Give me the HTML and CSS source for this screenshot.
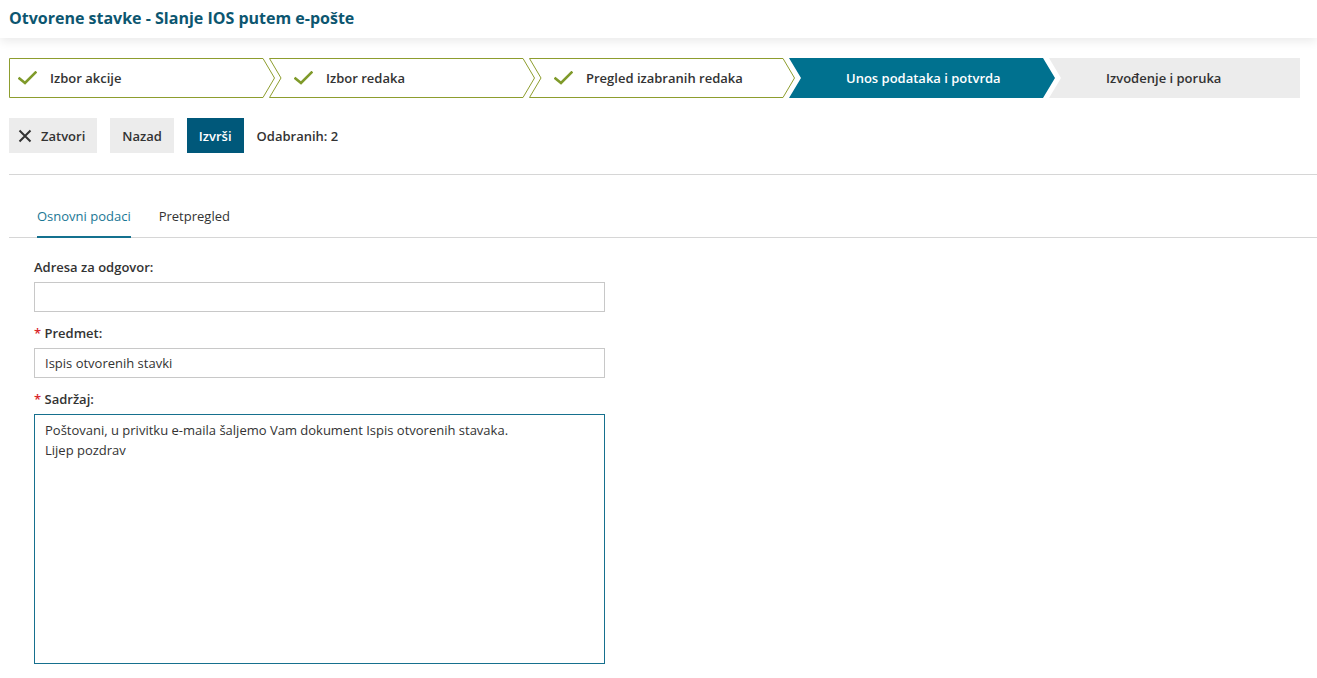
FILE: index.html
```html
<!DOCTYPE html>
<html lang="hr">
<head>
    <meta charset="UTF-8">
    <meta name="viewport" content="width=device-width, initial-scale=1.0">
    <title>Otvorene stavke - Slanje IOS putem e-pošte</title>
    <link rel="stylesheet" href="styles.css">
</head>
<body>

    <!-- Page header -->
    <div class="page-header">
        <h1>Otvorene stavke - Slanje IOS putem e-pošte</h1>
    </div>

    <!-- Wizard steps -->
    <div class="steps">
        <div class="step done first">
            <svg class="shape" width="266" height="40" viewBox="0 0 266 40"><polygon points="0.5,0.5 254,0.5 265.5,20 254,39.5 0.5,39.5" /></svg>
            <svg class="check" width="19" height="14" viewBox="0 0 19 14"><path d="M1.5 7.5 L7 12 L17.5 1.5" /></svg>
            <span class="step-label">Izbor akcije</span>
        </div>
        <div class="step done">
            <svg class="shape" width="266" height="40" viewBox="0 0 266 40"><polygon points="0.5,0.5 254,0.5 265.5,20 254,39.5 0.5,39.5 12,20" /></svg>
            <svg class="check" width="19" height="14" viewBox="0 0 19 14"><path d="M1.5 7.5 L7 12 L17.5 1.5" /></svg>
            <span class="step-label">Izbor redaka</span>
        </div>
        <div class="step done">
            <svg class="shape" width="266" height="40" viewBox="0 0 266 40"><polygon points="0.5,0.5 254,0.5 265.5,20 254,39.5 0.5,39.5 12,20" /></svg>
            <svg class="check" width="19" height="14" viewBox="0 0 19 14"><path d="M1.5 7.5 L7 12 L17.5 1.5" /></svg>
            <span class="step-label">Pregled izabranih redaka</span>
        </div>
        <div class="step active">
            <svg class="shape" width="266" height="40" viewBox="0 0 266 40"><polygon points="0,0 254,0 266,20 254,40 0,40 12,20" /></svg>
            <span class="step-label">Unos podataka i potvrda</span>
        </div>
        <div class="step todo last">
            <svg class="shape" width="251" height="40" viewBox="0 0 251 40"><polygon points="0,0 251,0 251,40 0,40 12,20" /></svg>
            <span class="step-label">Izvođenje i poruka</span>
        </div>
    </div>

    <!-- Toolbar -->
    <div class="toolbar">
        <button class="btn btn-light btn-close">
            <svg class="icon-x" width="14" height="14" viewBox="0 0 14 14"><path d="M1.5 1.5 L12.5 12.5 M12.5 1.5 L1.5 12.5" /></svg>
            Zatvori
        </button>
        <button class="btn btn-light">Nazad</button>
        <button class="btn btn-primary">Izvrši</button>
        <span class="selected-count">Odabranih: 2</span>
    </div>

    <div class="divider"></div>

    <!-- Tabs -->
    <div class="tabs">
        <a href="#" class="tab active">Osnovni podaci</a>
        <a href="#" class="tab">Pretpregled</a>
    </div>

    <!-- Form -->
    <div class="form">
        <label class="field-label" for="replyTo">Adresa za odgovor:</label>
        <input type="text" id="replyTo" class="field-input">

        <label class="field-label" for="subject"><span class="req">*</span> Predmet:</label>
        <input type="text" id="subject" class="field-input" value="Ispis otvorenih stavki">

        <label class="field-label" for="body"><span class="req">*</span> Sadržaj:</label>
        <textarea id="body" class="field-textarea">Poštovani, u privitku e-maila šaljemo Vam dokument Ispis otvorenih stavaka.
Lijep pozdrav</textarea>
    </div>

</body>
</html>
```

FILE: styles.css
```css
body { margin: 0; font-family: "Open Sans", "DejaVu Sans", sans-serif; font-size: 13px; color: #333; background: #fff; }

/* Header */
.page-header { height: 38px; padding: 0 9px; box-shadow: 0 3px 10px rgba(0, 0, 0, 0.09); position: relative; }
.page-header h1 { margin: 0; font-size: 16px; line-height: 36px; font-weight: 700; color: #0c5670; }

/* Wizard steps */
.steps { display: flex; margin: 20px 0 0 9px; height: 40px; }
.step { position: relative; width: 266px; height: 40px; margin-right: -6px; display: flex; align-items: center; padding-left: 25px; box-sizing: border-box; font-weight: 600; }
.step .shape { position: absolute; left: 0; top: 0; }
.step .check, .step .step-label { position: relative; }
.step.first { padding-left: 9px; }
.step.done .shape polygon { fill: #fff; stroke: #8d9d2e; stroke-width: 1; }
.step.active .shape polygon { fill: #00718f; }
.step.todo .shape polygon { fill: #ececec; }
.step.active, .step.todo { padding-left: 57px; }
.step.active .step-label { color: #fff; }
.step.last { width: 251px; margin-right: 0; }
.check { margin-right: 13px; }
.check path { fill: none; stroke: #7f9a2a; stroke-width: 2.6; stroke-linecap: square; }

/* Toolbar */
.toolbar { display: flex; align-items: center; gap: 13px; margin: 20px 0 0 9px; }
.btn { height: 35px; border: none; padding: 0 12px; font-family: inherit; font-size: 13px; font-weight: 600; cursor: pointer; display: flex; align-items: center; }
.btn-light { background: #ececec; color: #333; }
.btn-close { padding: 0 12px 0 9px; }
.btn-primary { background: #00587a; color: #fff; padding: 0 12px; }
.icon-x { margin-right: 9px; }
.icon-x path { stroke: #333; stroke-width: 2; fill: none; }
.selected-count { font-weight: 600; }

.divider { height: 1px; background: #d6d6d6; margin: 21px 0 0 9px; }

/* Tabs */
.tabs { display: flex; gap: 28px; margin-left: 9px; padding: 31px 0 0 28px; border-bottom: 1px solid #d6d6d6; }
.tab { display: block; line-height: 20px; padding-bottom: 10px; margin-bottom: -1px; border-bottom: 2px solid transparent; color: #333; text-decoration: none; }
.tab.active { color: #1b7795; border-bottom-color: #14718f; }

/* Form */
.form { margin: 19px 0 0 34px; width: 571px; display: flex; flex-direction: column; }
.field-label { font-weight: 600; line-height: 20px; margin-bottom: 5px; }
.req { color: #d9262c; }
.field-input { height: 30px; box-sizing: border-box; border: 1px solid #c8c8c8; padding: 0 10px; font-family: inherit; font-size: 13px; color: #333; margin: 0 0 11px; }
.field-textarea { height: 250px; box-sizing: border-box; border: 1px solid #16708e; padding: 5px 10px; font-family: inherit; font-size: 13px; line-height: 20px; color: #333; resize: none; outline: none; margin: 0; }
```
